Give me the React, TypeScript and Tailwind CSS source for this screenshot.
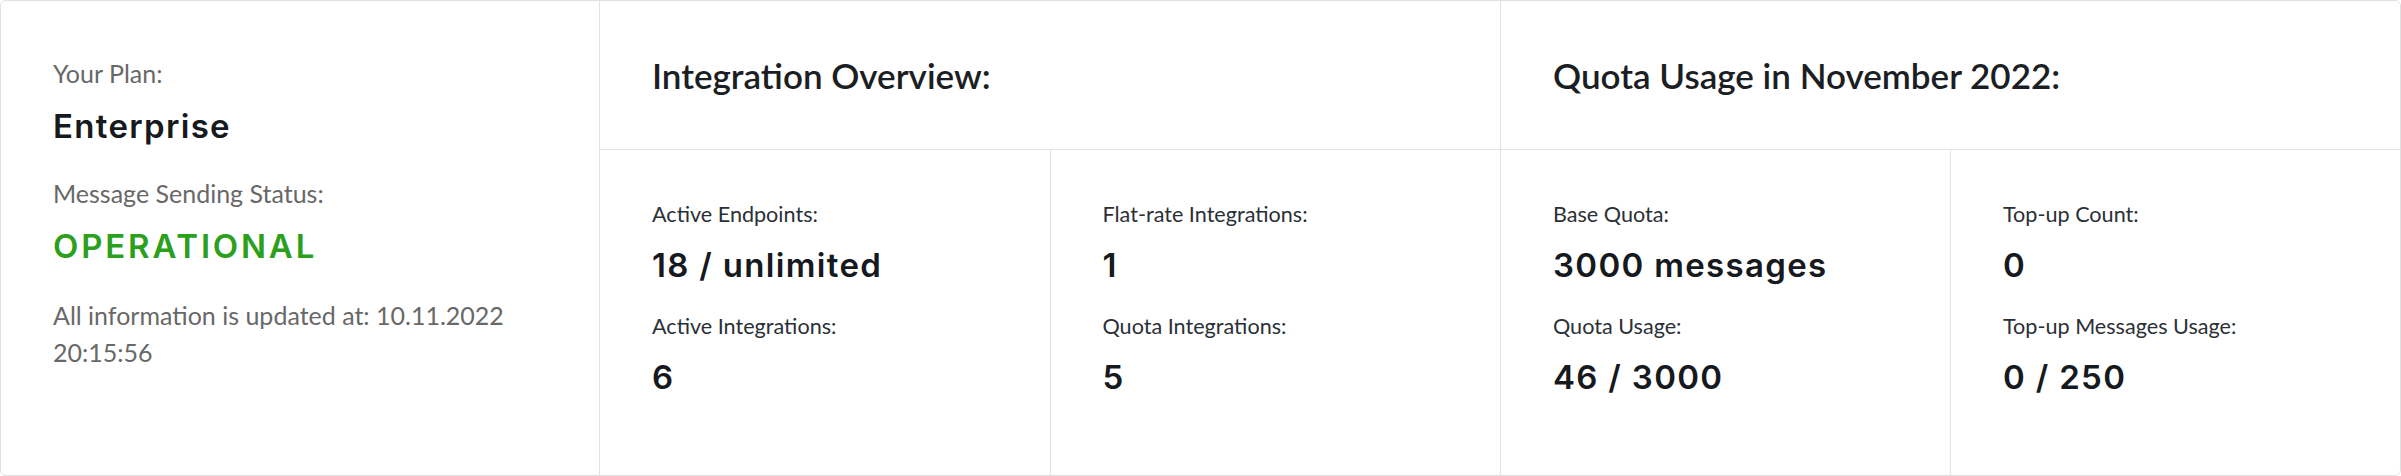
import React from "react";

const label1 = "text-[25px] leading-[36px] text-[#686868]";
const valueCls =
  "text-[33px] leading-[40px] font-semibold tracking-[0.04em] text-[#16191d]";
const label2 = "text-[21.6px] leading-[31.5px] text-[#2b3036]";

function Stat({ a, av, b, bv, border }: { a: string; av: string; b: string; bv: string; border?: boolean }) {
  return (
    <div className={"flex-1 pl-[52px] pt-[49px] " + (border ? "border-r border-[#e3e3e3]" : "")}>
      <div className={label2} style={{ fontFamily: "Lato, sans-serif" }}>{a}</div>
      <div className={valueCls + " mt-[14.5px]"} style={{ fontFamily: "Inter, sans-serif" }}>{av}</div>
      <div className={label2 + " mt-[26px]"} style={{ fontFamily: "Lato, sans-serif" }}>{b}</div>
      <div className={valueCls + " mt-[14.5px]"} style={{ fontFamily: "Inter, sans-serif" }}>{bv}</div>
    </div>
  );
}

function Section({ title, children, border }: { title: string; children: React.ReactNode; border?: boolean }) {
  return (
    <div className={"flex flex-col " + (border ? "border-r border-[#e3e3e3] w-[901px]" : "flex-1")}>
      <div className="h-[149px] border-b border-[#e3e3e3] flex items-center pl-[52px]">
        <div
          className="text-[35px] leading-[1.2] font-semibold text-[#1b1e22]"
          style={{ fontFamily: "Lato, sans-serif" }}
        >
          {title}
        </div>
      </div>
      <div className="flex flex-1">{children}</div>
    </div>
  );
}

export default function App() {
  return (
    <div className="w-[2401px] h-[476px] bg-white">
      <div className="w-full h-full border border-[#e0e0e0] rounded-[6px] flex overflow-hidden">
        <div className="w-[599px] border-r border-[#e3e3e3] pl-[52px] pr-[48px] pt-[54px]" style={{ fontFamily: "Lato, sans-serif" }}>
          <div className={label1}>Your Plan:</div>
          <div className={valueCls + " mt-[15px]"} style={{ fontFamily: "Inter, sans-serif" }}>Enterprise</div>
          <div className={label1 + " mt-[29px]"}>Message Sending Status:</div>
          <div
            className="text-[33px] leading-[40px] font-semibold tracking-[0.085em] text-[#2ba01d] mt-[15px]"
            style={{ fontFamily: "Inter, sans-serif" }}
          >
            OPERATIONAL
          </div>
          <div className="text-[25px] leading-[37px] text-[#686868] mt-[31px]">
            All information is updated at: 10.11.2022 20:15:56
          </div>
        </div>
        <Section title="Integration Overview:" border>
          <Stat a="Active Endpoints:" av="18 / unlimited" b="Active Integrations:" bv="6" border />
          <Stat a="Flat-rate Integrations:" av="1" b="Quota Integrations:" bv="5" />
        </Section>
        <Section title="Quota Usage in November 2022:">
          <Stat a="Base Quota:" av="3000 messages" b="Quota Usage:" bv="46 / 3000" border />
          <Stat a="Top-up Count:" av="0" b="Top-up Messages Usage:" bv="0 / 250" />
        </Section>
      </div>
    </div>
  );
}
